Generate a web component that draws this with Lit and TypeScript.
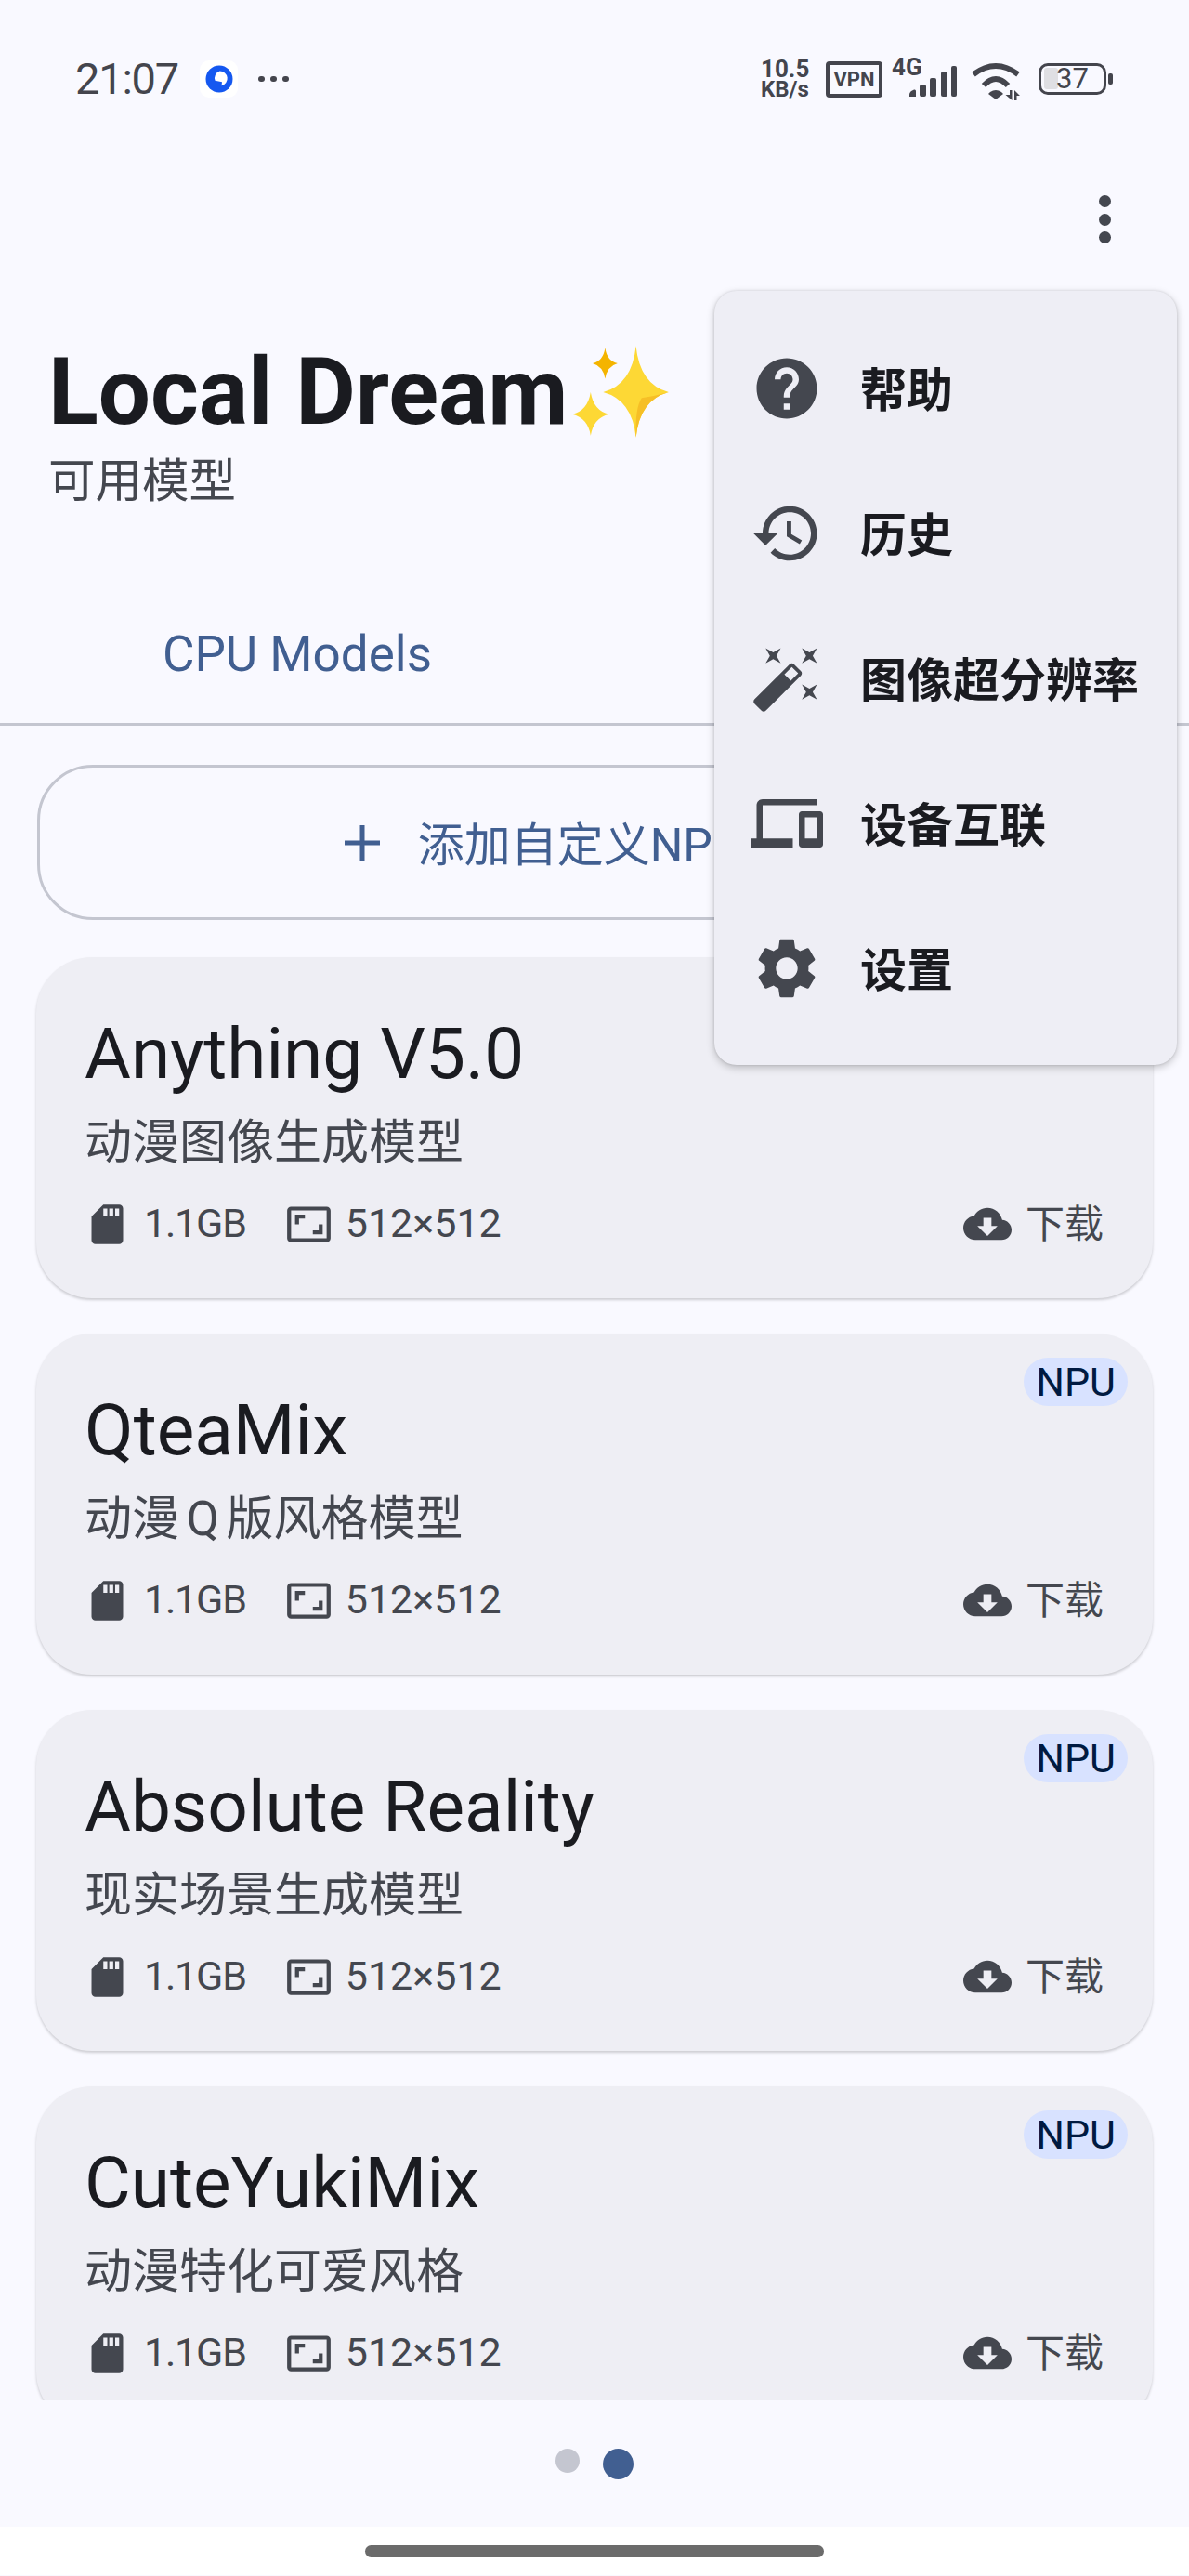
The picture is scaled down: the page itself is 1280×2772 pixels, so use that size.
import { LitElement, html, css, svg } from 'lit';
import { customElement } from 'lit/decorators.js';

const ICONS: Record<string, string> = {
  help: 'M12 2C6.48 2 2 6.48 2 12s4.48 10 10 10 10-4.48 10-10S17.52 2 12 2zm1 17h-2v-2h2v2zm2.07-7.75l-.9.92C13.45 12.9 13 13.5 13 15h-2v-.5c0-1.1.45-2.1 1.17-2.83l1.24-1.26c.37-.36.59-.86.59-1.41 0-1.1-.9-2-2-2s-2 .9-2 2H8c0-2.21 1.79-4 4-4s4 1.79 4 4c0 .88-.36 1.68-.93 2.25z',
  history: 'M13 3c-4.97 0-9 4.03-9 9H1l3.89 3.89.07.14L9 12H6c0-3.87 3.13-7 7-7s7 3.13 7 7-3.13 7-7 7c-1.93 0-3.68-.79-4.94-2.06l-1.42 1.42C8.27 19.99 10.51 21 13 21c4.97 0 9-4.03 9-9s-4.03-9-9-9zm-1 5v5l4.28 2.54.72-1.21-3.5-2.08V8H12z',
  wand: 'M7.5 5.6L10 7 8.6 4.5 10 2 7.5 3.4 5 2l1.4 2.5L5 7zm12 9.8L17 14l1.4 2.5L17 19l2.5-1.4L22 19l-1.4-2.5L22 14zM22 2l-2.5 1.4L17 2l1.4 2.5L17 7l2.5-1.4L22 7l-1.4-2.5zm-7.63 5.29c-.39-.39-1.02-.39-1.41 0L1.29 18.96c-.39.39-.39 1.02 0 1.41l2.34 2.34c.39.39 1.02.39 1.41 0L16.7 11.05c.39-.39.39-1.02 0-1.41l-2.33-2.35zm-1.03 5.49l-2.12-2.12 2.44-2.44 2.12 2.12-2.44 2.44z',
  devices: 'M4 6h18V4H4c-1.1 0-2 .9-2 2v11H0v3h14v-3H4V6zm19 2h-6c-.55 0-1 .45-1 1v10c0 .55.45 1 1 1h6c.55 0 1-.45 1-1V9c0-.55-.45-1-1-1zm-1 9h-4v-7h4v7z',
  settings: 'M19.14,12.94c0.04-0.3,0.06-0.61,0.06-0.94c0-0.32-0.02-0.64-0.07-0.94l2.03-1.58c0.18-0.14,0.23-0.41,0.12-0.61 l-1.92-3.32c-0.12-0.22-0.37-0.29-0.59-0.22l-2.39,0.96c-0.5-0.38-1.03-0.7-1.62-0.94L14.4,2.81c-0.04-0.24-0.24-0.41-0.48-0.41 h-3.84c-0.24,0-0.43,0.17-0.47,0.41L9.25,5.35C8.66,5.59,8.12,5.92,7.63,6.29L5.24,5.33c-0.22-0.08-0.47,0-0.59,0.22L2.74,8.87 C2.62,9.08,2.66,9.34,2.86,9.48l2.03,1.58C4.84,11.36,4.8,11.69,4.8,12s0.02,0.64,0.07,0.94l-2.03,1.58 c-0.18,0.14-0.23,0.41-0.12,0.61l1.92,3.32c0.12,0.22,0.37,0.29,0.59,0.22l2.39-0.96c0.5,0.38,1.03,0.7,1.62,0.94l0.36,2.54 c0.05,0.24,0.24,0.41,0.48,0.41h3.84c0.24,0,0.44-0.17,0.47-0.41l0.36-2.54c0.59-0.24,1.13-0.56,1.62-0.94l2.39,0.96 c0.22,0.08,0.47,0,0.59-0.22l1.92-3.32c0.12-0.22,0.07-0.47-0.12-0.61L19.14,12.94z M12,15.6c-1.98,0-3.6-1.62-3.6-3.6 s1.62-3.6,3.6-3.6s3.6,1.62,3.6,3.6S13.98,15.6,12,15.6z',
  sd: 'M18 2h-8L4.02 8 4 20c0 1.1.9 2 2 2h12c1.1 0 2-.9 2-2V4c0-1.1-.9-2-2-2zm-6 6h-2V4h2v4zm3 0h-2V4h2v4zm3 0h-2V4h2v4z',
  aspect: 'M19 12h-2v3h-3v2h5v-5zM7 9h3V7H5v5h2V9zm14-6H3c-1.1 0-2 .9-2 2v14c0 1.1.9 2 2 2h18c1.1 0 2-.9 2-2V5c0-1.1-.9-2-2-2zm0 16.01H3V4.99h18v14.02z',
  cloud: 'M19.35 10.04C18.67 6.59 15.64 4 12 4 9.11 4 6.6 5.64 5.35 8.04 2.34 8.36 0 10.91 0 14c0 3.31 2.69 6 6 6h13c2.76 0 5-2.24 5-5 0-2.64-2.05-4.78-4.65-4.96zM17 13l-5 5-5-5h3V9h4v4h3z',
};

const icon = (name: string) =>
  html`<svg viewBox="0 0 24 24" fill="currentColor">${svg`<path d=${ICONS[name]}></path>`}</svg>`;

// first card's badge sits under the open menu
const MODELS = [
  { name: 'Anything V5.0', desc: '动漫图像生成模型', npu: false },
  { name: 'QteaMix', desc: '动漫 Q 版风格模型', npu: true },
  { name: 'Absolute Reality', desc: '现实场景生成模型', npu: true },
  { name: 'CuteYukiMix', desc: '动漫特化可爱风格', npu: true },
];

const MENU = [
  { icon: 'help', label: '帮助' },
  { icon: 'history', label: '历史' },
  { icon: 'wand', label: '图像超分辨率' },
  { icon: 'devices', label: '设备互联' },
  { icon: 'settings', label: '设置' },
];

@customElement('app-root')
export class AppRoot extends LitElement {
  static styles = css`
    :host {
      display: block;
      position: relative;
      width: 1280px;
      height: 2772px;
      overflow: hidden;
      background: #f9f9ff;
      color: #1a1b20;
      font-family: Roboto, "Noto Sans CJK SC", sans-serif;
    }

    .status {
      height: 170px;
      display: flex;
      align-items: center;
      justify-content: space-between;
      padding: 0 82px 0 81px;
      box-sizing: border-box;
      color: #44454d;
    }
    .status-left { display: flex; align-items: center; }
    .time { font-size: 47px; letter-spacing: -1.2px; line-height: 50px; }
    .app-dot {
      width: 41px;
      height: 40px;
      margin-left: 23px;
      background: #fff;
      border-radius: 10px;
      display: flex;
      align-items: center;
      justify-content: center;
    }
    .more-dots { display: flex; gap: 6.5px; margin-left: 22px; }
    .more-dots i { width: 6.5px; height: 6.5px; border-radius: 50%; background: #44454d; }

    .status-right { display: flex; align-items: center; font-weight: 700; }
    .speed { width: 56px; display: flex; flex-direction: column; font-size: 26px; line-height: 22px; white-space: nowrap; }
    .speed span + span { font-size: 24px; }
    .vpn {
      width: 61px;
      height: 39px;
      box-sizing: border-box;
      margin-left: 14px;
      border: 4px solid #44454d;
      border-radius: 4px;
      display: flex;
      align-items: center;
      justify-content: center;
      font-size: 22px;
    }
    .net { width: 32px; margin-left: 10px; align-self: flex-start; font-size: 26px; line-height: 24px; margin-top: -3px; }
    .bars { width: 51px; height: 33px; display: block; margin-left: -13px; margin-top: 4px; }
    .wifi { width: 54px; height: 42px; display: block; margin-left: 15px; margin-top: 3px; }
    .battery { display: flex; align-items: center; margin-left: 19px; font-weight: 400; }
    .battery-body {
      position: relative;
      width: 73px;
      height: 34px;
      box-sizing: border-box;
      border: 3.5px solid #44454d;
      border-radius: 10px;
      display: flex;
      align-items: center;
      justify-content: center;
      font-size: 31px;
      line-height: 28px;
    }
    .battery-fill {
      position: absolute;
      left: 3px;
      top: 2px;
      width: 15px;
      height: 23px;
      border-radius: 3px;
      background: #dfdfe3;
    }
    .battery-body span { position: relative; }
    .battery-tip { width: 5px; height: 12px; margin-left: 2px; border-radius: 2px; background: #44454d; }

    .action {
      height: 132px;
      display: flex;
      align-items: center;
      justify-content: flex-end;
      padding-right: 84px;
    }
    .kebab { display: flex; flex-direction: column; gap: 6.5px; }
    .kebab i { width: 13px; height: 13px; border-radius: 50%; background: #44474f; }

    .head { padding: 60px 52px 75px; }
    .app-title {
      display: flex;
      align-items: center;
      height: 120px;
      font-size: 99.5px;
      font-weight: 700;
      line-height: 120px;
      white-space: nowrap;
    }
    .sparkle { width: 112px; height: 112px; margin-left: 0; flex: none; }
    .app-sub { font-size: 50.5px; line-height: 70px; margin-top: 1px; color: #44474f; }

    .tabs { display: flex; height: 153px; box-sizing: border-box; border-bottom: 3px solid #c4c6d0; }
    .tab {
      flex: 1;
      display: flex;
      align-items: center;
      justify-content: center;
      padding-top: 2px;
      font-size: 53px;
      color: #415f91;
    }

    .list {
      height: 1802px;
      overflow: hidden;
      padding: 42px 39px 0;
      box-sizing: border-box;
    }
    .add {
      height: 167px;
      box-sizing: border-box;
      border: 3.5px solid #c4c6d0;
      border-radius: 60px;
      margin: 0 1px 40px;
      padding-right: 10px;
      display: flex;
      align-items: center;
      justify-content: center;
      gap: 41px;
      font-size: 50px;
      color: #415f91;
      white-space: nowrap;
    }
    .add svg { width: 38px; height: 38px; flex: none; }
    .add span { padding-bottom: 3px; }

    .card {
      position: relative;
      height: 367px;
      box-sizing: border-box;
      padding: 56px 51px 0;
      margin-bottom: 38px;
      background: #eeeef4;
      border-radius: 60px;
      box-shadow: 0 2px 3px rgba(0, 0, 0, 0.18);
    }
    .badge {
      position: absolute;
      top: 26px;
      right: 27px;
      height: 52px;
      padding: 0 13px;
      display: flex;
      align-items: center;
      border-radius: 26px;
      background: #d8e2ff;
      color: #001a41;
      font-size: 43px;
    }
    .name { font-size: 76.5px; line-height: 96px; margin-left: 1px; color: #1a1b20; }
    .desc { font-size: 51px; line-height: 70px; margin: 13px 0 0 1px; color: #44474f; word-spacing: -5px; }
    .meta {
      display: flex;
      align-items: center;
      height: 52px;
      margin-top: 26px;
      font-size: 43px;
      color: #44474f;
    }
    .meta svg { width: 51px; height: 51px; flex: none; margin-right: 14px; }
    .meta .size { padding-bottom: 2px; letter-spacing: -1.2px; }
    .meta .res { padding-bottom: 2px; }
    .meta .gap { margin-left: 42px; }
    .meta .dl { margin-left: auto; display: flex; align-items: center; font-size: 42px; padding-right: 2px; }
    .meta .dl svg { width: 52px; height: 52px; margin-right: 15px; }
    .meta .dl span { padding-bottom: 7px; }

    .pager {
      height: 136px;
      display: flex;
      align-items: center;
      justify-content: center;
      gap: 25.5px;
    }
    .pager .off { width: 26px; height: 26px; border-radius: 50%; background: #c4c6d0; margin-top: -6px; }
    .pager .on { width: 33px; height: 33px; border-radius: 50%; background: #415f91; }

    .nav {
      height: 52px;
      box-sizing: border-box;
      background: #fff;
      display: flex;
      justify-content: center;
      padding-top: 20px;
    }
    .nav i { width: 494px; height: 13px; border-radius: 7px; background: #6b6b6b; }

    .menu {
      position: absolute;
      left: 769px;
      top: 313px;
      width: 498px;
      box-sizing: border-box;
      padding: 27px 0 26px 39px;
      background: #eeeef5;
      border-radius: 24px;
      box-shadow: 0 3px 8px rgba(0, 0, 0, 0.22), 0 0 3px rgba(0, 0, 0, 0.12);
    }
    .item {
      height: 156px;
      display: flex;
      align-items: center;
      gap: 40px;
      font-size: 50px;
      font-weight: 700;
      color: #1a1b20;
    }
    .item span { padding-bottom: 5px; }
    .item svg { width: 78px; height: 78px; color: #44474f; flex: none; }
  `;

  render() {
    return html`
      <div class="status">
        <div class="status-left">
          <span class="time">21:07</span>
          <span class="app-dot">
            <svg width="30" height="30" viewBox="0 0 30 30">
              <circle cx="15" cy="15" r="14.5" fill="#1558f0"></circle>
              <path d="M15.500 6.500a8.500 8 0 0 1 2 15.700l.5-4-7.500-1.500a8.500 8 0 0 1 5-10.200z" fill="#fff"></path>
            </svg>
          </span>
          <span class="more-dots"><i></i><i></i><i></i></span>
        </div>
        <div class="status-right">
          <div class="speed"><span>10.5</span><span>KB/s</span></div>
          <div class="vpn">VPN</div>
          <div class="net">4G</div>
          <svg class="bars" viewBox="0 0 51 33" fill="currentColor">
            <path d="M0 33v-2q0-3 3-4.500l2-1q2-.5 2 1.500v6z"></path>
            <rect x="11" y="20" width="7" height="13" rx="2"></rect>
            <rect x="22" y="13" width="7" height="20" rx="2"></rect>
            <rect x="34" y="6" width="7" height="27" rx="2"></rect>
            <rect x="45" y="0" width="6" height="33" rx="2"></rect>
          </svg>
          <svg class="wifi" viewBox="0 0 54 42" fill="currentColor">
            <g fill="none" stroke="currentColor" stroke-width="6">
              <path d="M3 14Q27 -4 51 14"></path>
              <path d="M14 26Q27 12 40 26"></path>
            </g>
            <path d="M21 33Q27 29 33 33L35 35 27 41 19 35z"></path>
            <path d="M42 31h2.500v11l-7-6h4.500zM47 31l6 6h-3.500v5H47z"></path>
          </svg>
          <div class="battery">
            <div class="battery-body"><i class="battery-fill"></i><span>37</span></div>
            <i class="battery-tip"></i>
          </div>
        </div>
      </div>

      <div class="action">
        <div class="kebab"><i></i><i></i><i></i></div>
      </div>

      <div class="head">
        <div class="app-title">
          <span>Local Dream</span>
          <svg class="sparkle" viewBox="0 0 108 108">
            <path d="M70 6Q74 46 104 54 74 62 70 101 66 62 36 54 66 46 70 6z" fill="#fdd835"></path>
            <path d="M104 54Q74 62 70 101 69 70 76 60 90 58 104 54z" fill="#f6bf26"></path>
            <path d="M38 8Q40 22 51 24 40 27 38 40 36 27 25 24 36 22 38 8z" fill="#f4b400"></path>
            <path d="M23 54Q26 73 42 77 26 81 23 99 20 81 4 77 20 73 23 54z" fill="#fdd835"></path>
          </svg>
        </div>
        <div class="app-sub">可用模型</div>
      </div>

      <div class="tabs">
        <div class="tab">CPU Models</div>
        <div class="tab"></div>
      </div>

      <div class="list">
        <div class="add">
          <svg viewBox="0 0 38 38" fill="currentColor"><path d="M16.500 0h5v16.500H38v5H21.500V38h-5V21.500H0v-5h16.500z"></path></svg>
          <span>添加自定义NPU模型</span>
        </div>
        ${MODELS.map(
          (m) => html`
            <div class="card">
              ${m.npu ? html`<span class="badge">NPU</span>` : ''}
              <div class="name">${m.name}</div>
              <div class="desc">${m.desc}</div>
              <div class="meta">
                ${icon('sd')}<span class="size">1.1GB</span>
                <span class="gap"></span>
                ${icon('aspect')}<span class="res">512×512</span>
                <span class="dl">${icon('cloud')}<span>下载</span></span>
              </div>
            </div>
          `
        )}
      </div>

      <div class="pager"><span class="off"></span><span class="on"></span></div>
      <div class="nav"><i></i></div>

      <div class="menu">
        ${MENU.map((it) => html`<div class="item">${icon(it.icon)}<span>${it.label}</span></div>`)}
      </div>
    `;
  }
}
